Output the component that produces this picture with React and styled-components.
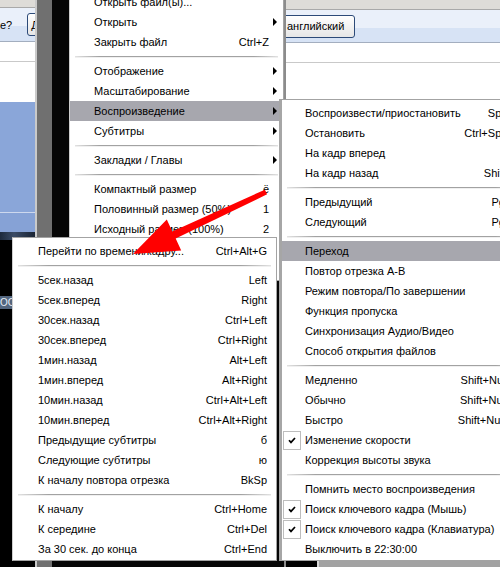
import React from "react"
import styled, { createGlobalStyle } from "styled-components"

const GlobalStyle = createGlobalStyle`
  html, body {
    margin: 0;
    padding: 0;
    background: #000;
  }
  body {
    width: 500px;
    height: 567px;
    overflow: hidden;
    font-family: "Liberation Sans", Arial, sans-serif;
    font-size: 11px;
    color: #000;
  }
`

const Screen = styled.div`
  position: relative;
  width: 500px;
  height: 567px;
  overflow: hidden;
`

// ---- background windows ----
const Desktop = styled.div`
  display: flex;
  height: 100%;
`
const BrowserColumn = styled.div`
  width: ${p => p.$w}px;
  flex: ${p => (p.$grow ? 1 : "none")};
  display: flex;
  flex-direction: column;
  overflow: hidden;
  background: ${p => (p.$grow ? "#fff" : "#000")};
  border-left: ${p => (p.$grow ? "2px solid #8c8c8c" : "none")};
`
const TitleStrip = styled.div`
  height: ${p => p.$h}px;
  flex: none;
  background: #dedcd8;
  border-bottom: 1px solid #a9a9a9;
`
const InfoBar = styled.div`
  height: ${p => p.$h}px;
  flex: none;
  display: flex;
  align-items: center;
  white-space: nowrap;
  background: linear-gradient(#eaf0fa 0 55%, #d7e3f5 55%);
  border-bottom: 1px solid #a3aebf;
`
const BarButton = styled.div`
  height: 21px;
  flex: none;
  display: flex;
  align-items: center;
  margin-left: ${p => p.$ml}px;
  padding: 0 10px 0 ${p => p.$pl}px;
  border: 1px solid #2c4a78;
  border-radius: 3px;
  background: linear-gradient(#ffffff, #e6e6e6);
`
const PageHeader = styled.div`
  height: 19px;
  flex: none;
  background: #fff;
  border-bottom: 1px solid #c9c9c9;
`
const PageGap = styled.div`
  height: ${p => p.$h}px;
  flex: none;
  background: #fff;
`
const Picture = styled.div`
  height: 130px;
  flex: none;
  background: linear-gradient(#8aa6d9 0 110px, #cdd8ee 110px 111px, #86a2d6 111px);
`
const DarkStrip = styled.div`
  height: 8px;
  flex: none;
  background: linear-gradient(90deg, #1d2a3c, #3a4b66 40%, #1a2434);
`
const VideoArea = styled.div`
  flex: 1;
  background: #000;
  padding-top: 56px;
`
const OsdChip = styled.div`
  width: 12px;
  height: 13px;
  background: #53667f;
  color: #e8eef8;
  font-size: 10px;
  line-height: 13px;
  overflow: hidden;
  white-space: nowrap;
`
const FrameEdge = styled.div`
  width: ${p => p.$w}px;
  flex: none;
  background: ${p => p.$c};
`
const Filler = styled.div`
  flex: 1;
`
const BottomStrip = styled.div`
  height: 6px;
  flex: none;
  display: flex;
  background: #a2a2a2;
`
const BottomBlack = styled.div`
  width: 31px;
  background: #000;
  border-right: 2px solid #d8d8d8;
`

// ---- menus ----
const Menu = styled.div`
  --lead: ${p => p.$lead}px;
  --tail: ${p => p.$tail}px;
  position: absolute;
  left: ${p => p.$x}px;
  top: ${p => p.$y}px;
  width: ${p => p.$w}px;
  z-index: ${p => p.$z};
  background: #fff;
  border: 1px solid #a3a3a3;
  border-left: ${p => p.$edge}px solid ${p => (p.$edge > 1 ? "#a6a6a6" : "#cfcfcf")};
  padding: 3px 0 1px;
`
const Row = styled.div`
  display: grid;
  grid-template-columns: var(--lead) 1fr auto var(--tail);
  align-items: center;
  height: 20px;
  white-space: nowrap;
  background: ${p => (p.$active ? "#a7a7ae" : "transparent")};
`
const Lead = styled.div`
  height: 20px;
  display: flex;
  align-items: center;
`
const CheckBox = styled.div`
  width: 16px;
  height: 17px;
  margin-left: 1px;
  border: 1px solid #bdbdbd;
  display: flex;
  align-items: center;
  justify-content: center;
`
const Label = styled.span`
  overflow: hidden;
`
const Keys = styled.span`
  padding-left: 16px;
`
const Tail = styled.div`
  display: flex;
  align-items: center;
  padding-left: 4px;
`
const SubArrow = styled.span`
  width: 0;
  height: 0;
  border-left: 4px solid #000;
  border-top: 4px solid transparent;
  border-bottom: 4px solid transparent;
`
const Separator = styled.div`
  height: 9px;
  display: flex;
  flex-direction: column;
  justify-content: center;
  padding: 0 5px;
  &::before {
    content: "";
    height: 1px;
    background: linear-gradient(90deg, #e2e2e2, #a2a2a2 12%, #a2a2a2 88%, #e2e2e2);
  }
  &::after {
    content: "";
    height: 1px;
    background: #f0f0f0;
  }
`

const ArrowLayer = styled.svg`
  position: absolute;
  left: 0;
  top: 0;
  z-index: 10;
  pointer-events: none;
`

const mainItems = [
  { t: "Открыть файл(ы)..." },
  { t: "Открыть", sub: true },
  { t: "Закрыть файл", k: "Ctrl+Z" },
  "-",
  { t: "Отображение", sub: true },
  { t: "Масштабирование", sub: true },
  { t: "Воспроизведение", sub: true, active: true },
  { t: "Субтитры", sub: true },
  "-",
  { t: "Закладки / Главы", sub: true },
  "-",
  { t: "Компактный размер", k: "ё" },
  { t: "Половинный размер (50%)", k: "1" },
  { t: "Исходный размер (100%)", k: "2" },
  { t: "Двойной размер (200%)", k: "3" },
  { t: "Во весь экран", k: "Enter" },
]

const playItems = [
  { t: "Воспроизвести/приостановить", k: "Space" },
  { t: "Остановить", k: "Ctrl+Space" },
  { t: "На кадр вперед", k: "F" },
  { t: "На кадр назад", k: "Shift+F" },
  "-",
  { t: "Предыдущий", k: "PgUp" },
  { t: "Следующий", k: "PgDn" },
  "-",
  { t: "Переход", sub: true, active: true },
  { t: "Повтор отрезка A-B", sub: true },
  { t: "Режим повтора/По завершении", sub: true },
  { t: "Функция пропуска", sub: true },
  { t: "Синхронизация Аудио/Видео", sub: true },
  { t: "Способ открытия файлов", sub: true },
  "-",
  { t: "Медленно", k: "Shift+Num -" },
  { t: "Обычно", k: "Shift+Num *" },
  { t: "Быстро", k: "Shift+Num +" },
  { t: "Изменение скорости", check: true },
  { t: "Коррекция высоты звука" },
  "-",
  { t: "Помнить место воспроизведения" },
  { t: "Поиск ключевого кадра (Мышь)", check: true },
  { t: "Поиск ключевого кадра (Клавиатура)", check: true },
  { t: "Выключить в 22:30:00" },
]

const seekItems = [
  { t: "Перейти по времени/кадру...", k: "Ctrl+Alt+G" },
  "-",
  { t: "5сек.назад", k: "Left" },
  { t: "5сек.вперед", k: "Right" },
  { t: "30сек.назад", k: "Ctrl+Left" },
  { t: "30сек.вперед", k: "Ctrl+Right" },
  { t: "1мин.назад", k: "Alt+Left" },
  { t: "1мин.вперед", k: "Alt+Right" },
  { t: "10мин.назад", k: "Ctrl+Alt+Left" },
  { t: "10мин.вперед", k: "Ctrl+Alt+Right" },
  { t: "Предыдущие субтитры", k: "б" },
  { t: "Следующие субтитры", k: "ю" },
  { t: "К началу повтора отрезка", k: "BkSp" },
  "-",
  { t: "К началу", k: "Ctrl+Home" },
  { t: "К середине", k: "Ctrl+Del" },
  { t: "За 30 сек. до конца", k: "Ctrl+End" },
]

const CheckMark = () => (
  <svg width="8" height="7" viewBox="0 0 8 7">
    <path d="M1 3.2 L3 5.4 L7 1" stroke="#000" strokeWidth="1.7" fill="none" />
  </svg>
)

const MenuList = ({ items, ...rest }) => (
  <Menu {...rest}>
    {items.map((it, i) =>
      it === "-" ? (
        <Separator key={i} />
      ) : (
        <Row key={i} $active={it.active}>
          <Lead>
            {it.check && (
              <CheckBox>
                <CheckMark />
              </CheckBox>
            )}
          </Lead>
          <Label>{it.t}</Label>
          <Keys>{it.k}</Keys>
          <Tail>{it.sub && <SubArrow />}</Tail>
        </Row>
      )
    )}
  </Menu>
)

const App = () => (
  <>
    <GlobalStyle />
    <Screen>
      <Desktop>
        <BrowserColumn $w={35}>
          <TitleStrip $h={7} />
          <InfoBar $h={33}>
            <span>e?</span>
            <BarButton $ml={15} $pl={3}>Да</BarButton>
          </InfoBar>
          <PageHeader />
          <PageGap $h={40} />
          <Picture />
          <DarkStrip />
          <VideoArea>
            <OsdChip>ОС</OsdChip>
          </VideoArea>
        </BrowserColumn>
        <FrameEdge $w={2} $c="#cacaca" />
        <FrameEdge $w={15} $c="#707070" />
        <FrameEdge $w={232} $c="#060606" />
        <BrowserColumn $grow>
          <TitleStrip $h={9} />
          <InfoBar $h={32}>
            <BarButton $ml={-4} $pl={4}>английский</BarButton>
          </InfoBar>
          <PageHeader />
          <Filler />
          <BottomStrip>
            <BottomBlack />
          </BottomStrip>
        </BrowserColumn>
      </Desktop>

      <MenuList items={mainItems} $x={69} $y={-12} $w={213} $lead={24} $tail={14} $edge={1} $z={1} />
      <MenuList items={playItems} $x={279} $y={99} $w={247} $lead={23} $tail={10} $edge={3} $z={2} />
      <MenuList items={seekItems} $x={12} $y={237} $w={263} $lead={25} $tail={9} $edge={1} $z={3} />

      <ArrowLayer width="500" height="567" viewBox="0 0 500 567">
        <polygon
          points="264.9,189.7 172.3,231.4 166.8,219.6 133,254 181.2,250.4 175.7,238.6 267.1,194.3"
          fill="#ff0000"
        />
      </ArrowLayer>
    </Screen>
  </>
)

export default App
